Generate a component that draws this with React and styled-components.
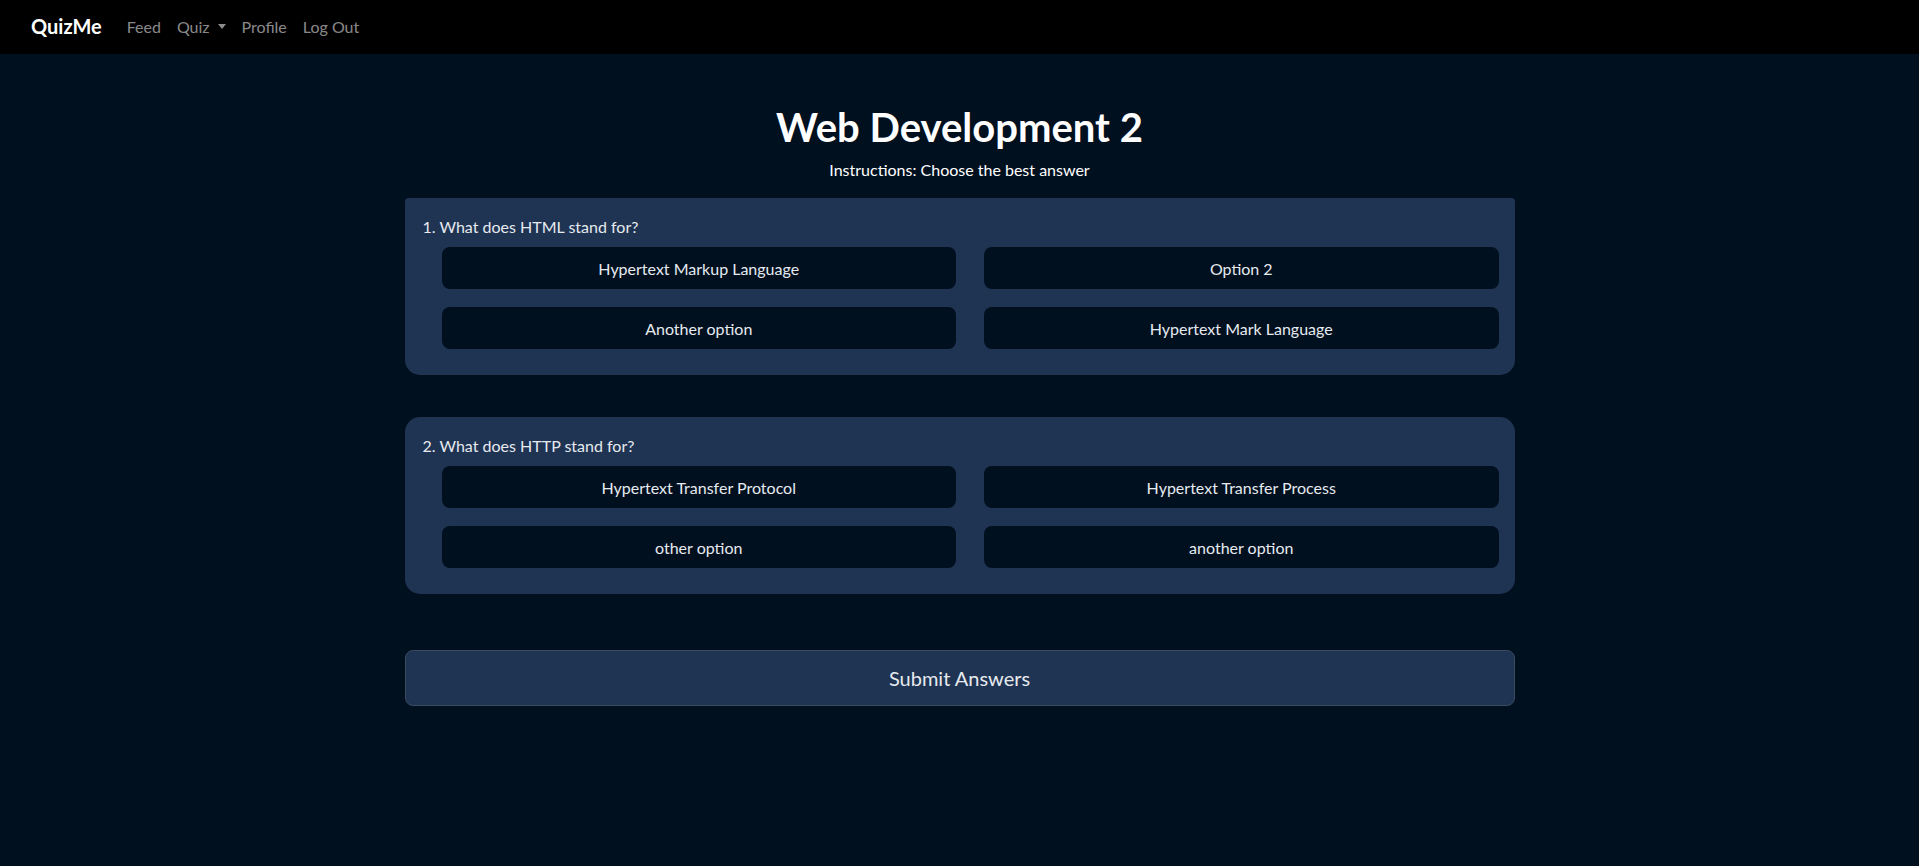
import React from 'react'
import styled, { createGlobalStyle } from 'styled-components'

const GlobalStyle = createGlobalStyle`
  body {
    margin: 0;
    background: #01101f;
    font-family: Lato, "Noto Sans", sans-serif;
    color: #e9edf2;
  }
`

const NavBar = styled.nav`
  height: 54px;
  background: #000;
  display: flex;
  align-items: center;
  padding: 0 0 2px 31px;
  box-sizing: border-box;
`
const Brand = styled.a`
  font-size: 20px;
  font-weight: 700;
  color: #fff;
  margin-right: 17px;
  text-decoration: none;
`
const NavLink = styled.a`
  font-size: 16px;
  color: rgba(255, 255, 255, 0.55);
  padding: 0 8px;
  display: flex;
  align-items: center;
  text-decoration: none;
`
const Caret = styled.span`
  display: inline-block;
  margin-left: 8px;
  border-top: 5px solid rgba(255, 255, 255, 0.55);
  border-left: 4px solid transparent;
  border-right: 4px solid transparent;
`

const Main = styled.main`
  width: 1110px;
  margin: 0 auto;
  padding-top: 49px;
  display: flex;
  flex-direction: column;
`
const Title = styled.h1`
  margin: 0;
  text-align: center;
  font-size: 40px;
  line-height: 48px;
  font-weight: 700;
  color: #fff;
`
const Instructions = styled.p`
  margin: 7px 0 16px;
  text-align: center;
  font-size: 16px;
  line-height: 24px;
  color: #fff;
`
const Card = styled.section`
  background: #1f3352;
  border-radius: ${p => (p.$first ? '4px 4px 15px 15px' : '15px')};
  padding: 17px 16px 26px 18px;
  margin-bottom: ${p => (p.$last ? '56px' : '42px')};
`
const Question = styled.div`
  font-size: 16px;
  line-height: 24px;
  color: #e6eaef;
  margin-bottom: 8px;
`
const Options = styled.div`
  display: grid;
  grid-template-columns: 1fr 1fr;
  column-gap: 28px;
  row-gap: 18px;
  margin-left: 19px;
`
const Option = styled.button`
  height: 42px;
  background: #01101f;
  border: none;
  border-radius: 8px;
  color: #e6eaef;
  font-family: inherit;
  font-size: 16px;
  cursor: pointer;
`
const Submit = styled.button`
  height: 56px;
  background: #1f3352;
  border: 1px solid #3a4a5f;
  border-radius: 8px;
  color: #e6eaef;
  font-family: inherit;
  font-size: 20px;
  cursor: pointer;
`

const questions = [
  {
    q: '1. What does HTML stand for?',
    options: ['Hypertext Markup Language', 'Option 2', 'Another option', 'Hypertext Mark Language']
  },
  {
    q: '2. What does HTTP stand for?',
    options: ['Hypertext Transfer Protocol', 'Hypertext Transfer Process', 'other option', 'another option']
  }
]

export default function App() {
  return (
    <>
      <GlobalStyle />
      <NavBar>
        <Brand href="#">QuizMe</Brand>
        <NavLink href="#">Feed</NavLink>
        <NavLink href="#">Quiz<Caret /></NavLink>
        <NavLink href="#">Profile</NavLink>
        <NavLink href="#">Log Out</NavLink>
      </NavBar>
      <Main>
        <Title>Web Development 2</Title>
        <Instructions>Instructions: Choose the best answer</Instructions>
        {questions.map((item, i) => (
          <Card key={i} $first={i === 0} $last={i === questions.length - 1}>
            <Question>{item.q}</Question>
            <Options>
              {item.options.map(opt => (
                <Option key={opt}>{opt}</Option>
              ))}
            </Options>
          </Card>
        ))}
        <Submit>Submit Answers</Submit>
      </Main>
    </>
  )
}
